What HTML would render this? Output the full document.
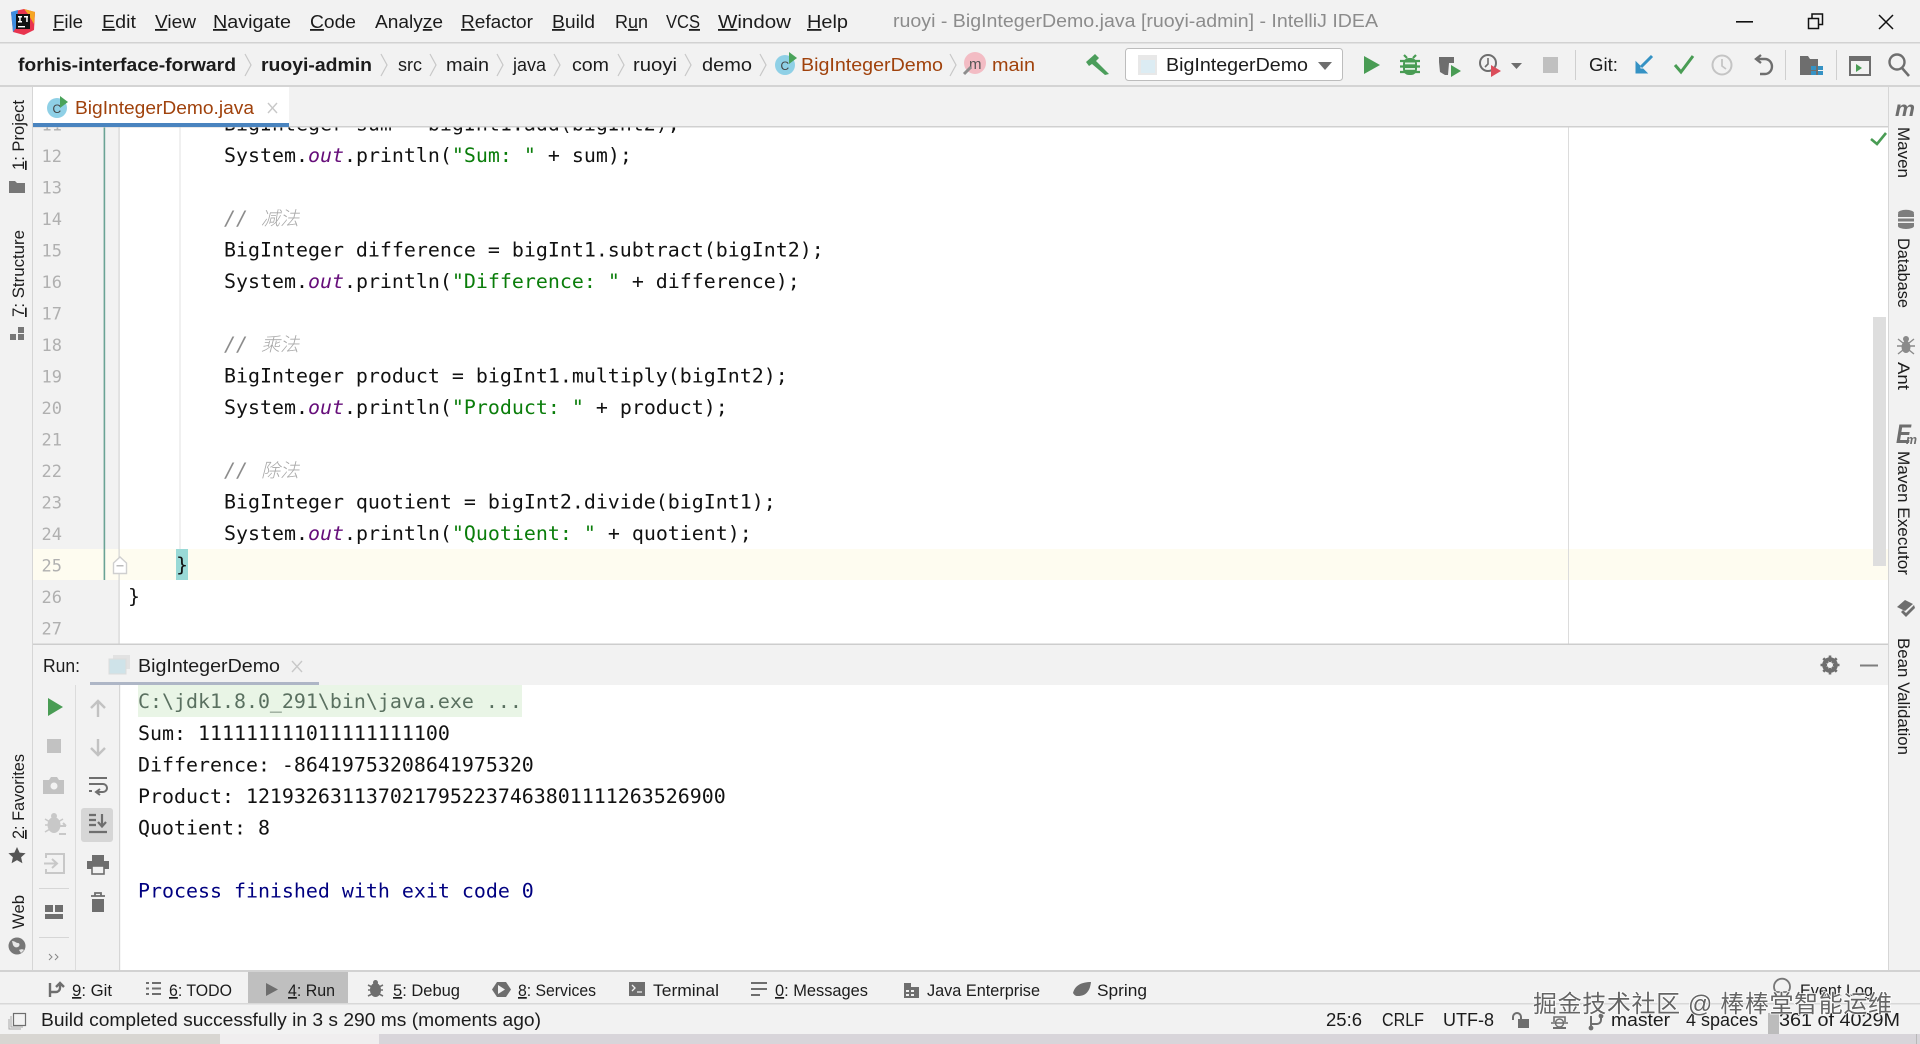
<!DOCTYPE html>
<html lang="en">
<head>
<meta charset="utf-8">
<title>ruoyi - BigIntegerDemo.java [ruoyi-admin] - IntelliJ IDEA</title>
<style>
html,body{margin:0;padding:0;background:#f2f2f2;width:1920px;height:1044px;overflow:hidden}
svg{display:block}
text{font-family:"Liberation Sans",sans-serif;font-size:18px;fill:#1c1c1c;white-space:pre}
.m{font-size:18px}
.c{font-family:"DejaVu Sans Mono","Liberation Mono",monospace;font-size:19.93px;fill:#111}
.n{font-family:"DejaVu Sans Mono","Liberation Mono",monospace;font-size:17px;fill:#b0b0b0}
.o{fill:#660e7a;font-style:italic}
.s{fill:#0a7d0a}
.g{font-family:"DejaVu Sans Mono","Liberation Mono",monospace;font-size:19.93px;fill:#8c8c8c;font-style:italic}
.z{font-family:"Liberation Sans","Noto Sans CJK SC",sans-serif;font-size:19px;fill:#a8a8a8;font-style:italic;font-weight:300}
.br{fill:#a0420c}
.chev{fill:none;stroke:#c8c8c8;stroke-width:1.2}
.wm{font-family:"Liberation Sans","Noto Sans CJK SC",sans-serif;font-size:24px;fill:#5e5e5e;stroke:#fff;stroke-width:1.6px;paint-order:stroke;opacity:.95}
</style>
</head>
<body>
<svg width="1920" height="1044" viewBox="0 0 1920 1044" xmlns="http://www.w3.org/2000/svg">
<defs><clipPath id="ed"><rect x="33" y="127" width="1855" height="517"/></clipPath></defs>
<rect width="1920" height="1044" fill="#f2f2f2"/>

<!-- title bar -->
<rect x="0" y="42" width="1920" height="1.5" fill="#d2d2d2"/>
<g>
  <path d="M11 12 L24 9 L35 12 L34 30 L24 35 L13 32 Z" fill="#e8344e"/>
  <path d="M24 9 L35 12 L34 24 L28 14 Z" fill="#f6a623"/>
  <path d="M11 12 L18 10 L16 28 L13 32 Z" fill="#3d8de0"/>
  <rect x="16" y="14" width="14" height="15" fill="#111"/>
  <rect x="18" y="16" width="4" height="1.5" fill="#fff"/><rect x="19.2" y="16" width="1.5" height="6" fill="#fff"/>
  <rect x="18" y="21" width="4" height="1.5" fill="#fff"/><rect x="24" y="16" width="4" height="1.5" fill="#fff"/><rect x="26.2" y="16" width="1.5" height="6" fill="#fff"/>
  <rect x="18" y="26" width="7" height="1.4" fill="#fff"/>
</g>
<g class="m">
<text x="53" y="28" textLength="30" lengthAdjust="spacingAndGlyphs"><tspan text-decoration="underline">F</tspan>ile</text>
<text x="102" y="28" textLength="34" lengthAdjust="spacingAndGlyphs"><tspan text-decoration="underline">E</tspan>dit</text>
<text x="155" y="28" textLength="41" lengthAdjust="spacingAndGlyphs"><tspan text-decoration="underline">V</tspan>iew</text>
<text x="213" y="28" textLength="78" lengthAdjust="spacingAndGlyphs"><tspan text-decoration="underline">N</tspan>avigate</text>
<text x="310" y="28" textLength="46" lengthAdjust="spacingAndGlyphs"><tspan text-decoration="underline">C</tspan>ode</text>
<text x="375" y="28" textLength="68" lengthAdjust="spacingAndGlyphs">Analy<tspan text-decoration="underline">z</tspan>e</text>
<text x="461" y="28" textLength="72" lengthAdjust="spacingAndGlyphs"><tspan text-decoration="underline">R</tspan>efactor</text>
<text x="552" y="28" textLength="43" lengthAdjust="spacingAndGlyphs"><tspan text-decoration="underline">B</tspan>uild</text>
<text x="615" y="28" textLength="33" lengthAdjust="spacingAndGlyphs">R<tspan text-decoration="underline">u</tspan>n</text>
<text x="666" y="28" textLength="34" lengthAdjust="spacingAndGlyphs">VC<tspan text-decoration="underline">S</tspan></text>
<text x="718" y="28" textLength="73" lengthAdjust="spacingAndGlyphs"><tspan text-decoration="underline">W</tspan>indow</text>
<text x="807" y="28" textLength="41" lengthAdjust="spacingAndGlyphs"><tspan text-decoration="underline">H</tspan>elp</text>
<text x="893" y="27" textLength="485" lengthAdjust="spacingAndGlyphs" style="fill:#8c8c8c">ruoyi - BigIntegerDemo.java [ruoyi-admin] - IntelliJ IDEA</text>
</g>
<rect x="1736" y="21" width="17" height="1.6" fill="#111"/>
<path d="M1808.5 18.5h10v10h-10z M1812 18v-4h10.5v10.5h-4" fill="none" stroke="#111" stroke-width="1.5"/>
<path d="M1879 15l14 14M1893 15l-14 14" stroke="#111" stroke-width="1.5"/>

<!-- breadcrumb / toolbar -->
<rect x="0" y="85" width="1920" height="2" fill="#d4d4d4"/>
<g>
<text x="18" y="71" textLength="218" lengthAdjust="spacingAndGlyphs" font-weight="700">forhis-interface-forward</text>
<text x="261" y="71" textLength="111" lengthAdjust="spacingAndGlyphs" font-weight="700">ruoyi-admin</text>
<text x="398" y="71" textLength="24" lengthAdjust="spacingAndGlyphs">src</text>
<text x="446" y="71" textLength="43" lengthAdjust="spacingAndGlyphs">main</text>
<text x="513" y="71" textLength="33" lengthAdjust="spacingAndGlyphs">java</text>
<text x="572" y="71" textLength="37" lengthAdjust="spacingAndGlyphs">com</text>
<text x="633" y="71" textLength="44" lengthAdjust="spacingAndGlyphs">ruoyi</text>
<text x="702" y="71" textLength="50" lengthAdjust="spacingAndGlyphs">demo</text>
<text x="801" y="71" textLength="142" lengthAdjust="spacingAndGlyphs" class="br">BigIntegerDemo</text>
<text x="992" y="71" textLength="43" lengthAdjust="spacingAndGlyphs" class="br">main</text>
<path class="chev" d="M245 54l6 11-6 11M381 54l6 11-6 11M430 54l6 11-6 11M497 54l6 11-6 11M554 54l6 11-6 11M618 54l6 11-6 11M685 54l6 11-6 11M760 54l6 11-6 11M950 54l6 11-6 11"/>
<circle cx="785" cy="65" r="10" fill="#8fd0e6"/>
<text x="780.5" y="70" style="font-size:12px;fill:#444">C</text>
<path d="M789 52l8 6-8 6z" fill="#4aa35a"/>
<circle cx="975" cy="63" r="11" fill="#f3bcc4"/>
<text x="969" y="69" style="font-size:15px;fill:#555">m</text>
<path d="M964 74l7-7" stroke="#8d8d8d" stroke-width="3"/>
<!-- hammer -->
<path d="M1086 62 L1095 54 L1099 58 L1096 61 L1109 74 L1105 75 L1092 64 L1089 66 Z" fill="#4b9d5b"/>
<!-- run config -->
<rect x="1125.5" y="48.5" width="217" height="32" rx="3" fill="#fff" stroke="#bdbdbd"/>
<rect x="1138" y="55" width="19" height="20" fill="#e8e8e8"/><rect x="1141" y="60" width="14" height="13" fill="#dcecf3"/>
<text x="1166" y="71" textLength="142" lengthAdjust="spacingAndGlyphs">BigIntegerDemo</text>
<path d="M1318 62h14l-7 8z" fill="#6e6e6e"/>
<path d="M1364 56l16 9-16 9z" fill="#499c54"/>
<!-- bug -->
<g fill="#499c54"><rect x="1403" y="58" width="14" height="17" rx="6"/></g>
<path d="M1400 61h5M1420 61h-5M1400 66.5h5M1420 66.5h-5M1400 72h5M1420 72h-5M1404 55l3 3M1416 55l-3 3" stroke="#499c54" stroke-width="2.2"/>
<rect x="1405" y="62.5" width="10" height="1.8" fill="#dff0e2"/><rect x="1405" y="68" width="10" height="1.8" fill="#dff0e2"/>
<!-- coverage -->
<path d="M1439 57h15v6h-5l-1 12h-3l-5-3-1-10z" fill="#6e6e6e"/><path d="M1451 65l10 6-10 6z" fill="#499c54"/>
<!-- profile -->
<circle cx="1488" cy="63" r="8" fill="none" stroke="#6e6e6e" stroke-width="2"/><path d="M1488 58v6l-3 3" stroke="#6e6e6e" stroke-width="1.6" fill="none"/>
<path d="M1491 65l10 6-10 6z" fill="#db4d5a"/>
<path d="M1511 63h11l-5.5 6z" fill="#6e6e6e"/>
<rect x="1543" y="57" width="15" height="16" fill="#c0c0c0"/>
<rect x="1575" y="50" width="1" height="30" fill="#cfcfcf"/>
<text x="1589" y="71" textLength="29" lengthAdjust="spacingAndGlyphs">Git:</text>
<path d="M1652 56 L1641 67" stroke="#3592c4" stroke-width="3"/><path d="M1636 62 V73 H1647 L1643 69 H1640 V66 Z" fill="#3592c4" stroke="#3592c4"/>
<path d="M1675 65 L1681 72 L1693 56" fill="none" stroke="#499c54" stroke-width="3"/>
<circle cx="1722" cy="65" r="9.5" fill="none" stroke="#c4c4c4" stroke-width="2"/><path d="M1722 59v7l4 3" stroke="#c4c4c4" stroke-width="1.7" fill="none"/>
<path d="M1757 59h8a6.5 7 0 0 1 0 15h-5M1761 55l-5 4 5 4" fill="none" stroke="#6e6e6e" stroke-width="2.4"/>
<rect x="1785" y="50" width="1" height="30" fill="#cfcfcf"/>
<path d="M1800 56h8l2 3h8v16h-18z" fill="#6e6e6e"/>
<g fill="#3592c4"><rect x="1811" y="66" width="5" height="4"/><rect x="1818" y="66" width="5" height="4"/><rect x="1811" y="71" width="5" height="4"/><rect x="1818" y="71" width="5" height="4"/></g>
<rect x="1836" y="50" width="1" height="30" fill="#cfcfcf"/>
<rect x="1850" y="57" width="20" height="18" fill="none" stroke="#6e6e6e" stroke-width="2"/><rect x="1850" y="57" width="20" height="4" fill="#6e6e6e"/>
<path d="M1856 64l6 4-6 4z" fill="#499c54"/>
<circle cx="1897" cy="62" r="7.5" fill="none" stroke="#6e6e6e" stroke-width="2.4"/><path d="M1902 68l7 8" stroke="#6e6e6e" stroke-width="2.6"/>

<!-- editor -->
<rect x="33" y="127" width="1855" height="517" fill="#fff"/>
<rect x="33" y="127" width="86" height="517" fill="#f2f2f2"/>
<g clip-path="url(#ed)">
<rect x="33" y="549" width="1855" height="31" fill="#fefcf0"/>
<rect x="176" y="549" width="12" height="31" fill="#99d9d6"/>
<rect x="118.5" y="127" width="1.2" height="517" fill="#d4d4d4"/>
<rect x="179.5" y="127" width="1" height="422" fill="#e0e0e0"/>
<rect x="1568" y="127" width="1" height="517" fill="#dcdcdc"/>
<rect x="103.6" y="127" width="1.6" height="453" fill="#6aa395"/>
<path d="M113.5 563l6.5-6 6.5 6v10.5h-13z" fill="#fff" stroke="#cfcfcf" stroke-width="1.4"/><rect x="116.5" y="565" width="7" height="1.5" fill="#bcbcbc"/>
<g text-anchor="end">
<text class="n" x="62" y="130.6">11</text><text class="n" x="62" y="162.1">12</text><text class="n" x="62" y="193.6">13</text><text class="n" x="62" y="225.1">14</text><text class="n" x="62" y="256.6">15</text><text class="n" x="62" y="288.1">16</text><text class="n" x="62" y="319.6">17</text><text class="n" x="62" y="351.1">18</text><text class="n" x="62" y="382.6">19</text><text class="n" x="62" y="414.1">20</text><text class="n" x="62" y="445.6">21</text><text class="n" x="62" y="477.1">22</text><text class="n" x="62" y="508.6">23</text><text class="n" x="62" y="540.1">24</text><text class="n" x="62" y="571.6">25</text><text class="n" x="62" y="603.1">26</text><text class="n" x="62" y="634.6">27</text>
</g>
<text class="c" x="224" y="130.6">BigInteger sum = bigInt1.add(bigInt2);</text>
<text class="c" x="224" y="162.1">System.<tspan class="o">out</tspan>.println(<tspan class="s">"Sum: "</tspan> + sum);</text>
<text class="g" x="224" y="225.1">//</text><text class="z" x="261" y="225.1">减法</text>
<text class="c" x="224" y="256.6">BigInteger difference = bigInt1.subtract(bigInt2);</text>
<text class="c" x="224" y="288.1">System.<tspan class="o">out</tspan>.println(<tspan class="s">"Difference: "</tspan> + difference);</text>
<text class="g" x="224" y="351.1">//</text><text class="z" x="261" y="351.1">乘法</text>
<text class="c" x="224" y="382.6">BigInteger product = bigInt1.multiply(bigInt2);</text>
<text class="c" x="224" y="414.1">System.<tspan class="o">out</tspan>.println(<tspan class="s">"Product: "</tspan> + product);</text>
<text class="g" x="224" y="477.1">//</text><text class="z" x="261" y="477.1">除法</text>
<text class="c" x="224" y="508.6">BigInteger quotient = bigInt2.divide(bigInt1);</text>
<text class="c" x="224" y="540.1">System.<tspan class="o">out</tspan>.println(<tspan class="s">"Quotient: "</tspan> + quotient);</text>
<text class="c" x="176" y="571.6">}</text>
<text class="c" x="128" y="603.1">}</text>
<rect x="1873" y="317" width="13" height="249" fill="#dedede"/>
<path d="M1871 139l6 5 9-11" fill="none" stroke="#499c54" stroke-width="2.6"/>
</g>

<!-- tab bar -->
<rect x="33" y="126" width="1855" height="1.5" fill="#d0d0d0"/>
<rect x="33" y="87" width="256" height="36" fill="#fff"/>
<rect x="33" y="123" width="256" height="4" fill="#4a84bf"/>
<circle cx="57" cy="108" r="10" fill="#8fd0e6"/>
<text x="52.5" y="113" style="font-size:12px;fill:#444">C</text>
<path d="M60 96l8 6-8 6z" fill="#4aa35a"/>
<text x="75" y="114" textLength="179" lengthAdjust="spacingAndGlyphs" class="br">BigIntegerDemo.java</text>
<path d="M268 103l9 10M277 103l-9 10" stroke="#c8c8c8" stroke-width="1.4"/>

<!-- left strip -->
<rect x="32" y="87" width="1" height="883" fill="#d6d6d6"/>
<text transform="translate(24 170) rotate(-90)" textLength="70" lengthAdjust="spacingAndGlyphs" style="font-size:17px"><tspan text-decoration="underline">1</tspan>: Project</text>
<path d="M9 181h6l2 2h8v10h-16z" fill="#777"/>
<text transform="translate(24 317) rotate(-90)" textLength="87" lengthAdjust="spacingAndGlyphs" style="font-size:17px"><tspan text-decoration="underline">7</tspan>: Structure</text>
<g fill="#777"><rect x="10" y="334" width="6" height="6"/><rect x="18" y="327" width="6" height="6"/><rect x="18" y="334" width="6" height="6"/></g>
<text transform="translate(24 839) rotate(-90)" textLength="85" lengthAdjust="spacingAndGlyphs" style="font-size:17px"><tspan text-decoration="underline">2</tspan>: Favorites</text>
<path d="M17 847l2.6 5.6 6 .6-4.5 4 1.3 6-5.4-3.1-5.4 3.1 1.3-6-4.5-4 6-.6z" fill="#555"/>
<text transform="translate(24 929) rotate(-90)" textLength="34" lengthAdjust="spacingAndGlyphs" style="font-size:17px">Web</text>
<circle cx="17" cy="946" r="8.5" fill="#777"/><path d="M12 941c3 0 4 2 6 2s2 3 0 4-4 0-5-2zM19 950c2-1 4-1 5 0l-3 3z" fill="#e6e6e6"/>

<!-- right strip -->
<rect x="1888" y="87" width="1" height="917" fill="#d6d6d6"/>
<text x="1895" y="116" style="font-size:21px;font-weight:700;font-style:italic;fill:#6e6e6e" textLength="20" lengthAdjust="spacingAndGlyphs">m</text>
<text transform="translate(1898 127) rotate(90)" textLength="51" lengthAdjust="spacingAndGlyphs" style="font-size:17px">Maven</text>
<g fill="#7e7e7e"><ellipse cx="1906" cy="213" rx="8" ry="3.2"/><rect x="1898" y="214" width="16" height="3"/><rect x="1898" y="218.5" width="16" height="3"/><rect x="1898" y="223" width="16" height="3"/><ellipse cx="1906" cy="226" rx="8" ry="3"/></g>
<text transform="translate(1898 238) rotate(90)" textLength="70" lengthAdjust="spacingAndGlyphs" style="font-size:17px">Database</text>
<g fill="#8a8a8a"><ellipse cx="1906" cy="347" rx="4.5" ry="6"/><circle cx="1906" cy="339" r="3"/></g>
<path d="M1898 339l5 4M1914 339l-5 4M1897 346h6M1915 346h-6M1898 354l5-4M1914 354l-5-4" stroke="#8a8a8a" stroke-width="1.4"/>
<text transform="translate(1898 362) rotate(90)" textLength="28" lengthAdjust="spacingAndGlyphs" style="font-size:17px">Ant</text>
<text x="1896" y="443" style="font-size:27px;font-weight:700;font-style:italic;fill:#6e6e6e" textLength="15" lengthAdjust="spacingAndGlyphs">E</text>
<text x="1906" y="444" style="font-size:13px;font-weight:700;font-style:italic;fill:#6e6e6e" textLength="11" lengthAdjust="spacingAndGlyphs">m</text>
<text transform="translate(1898 451) rotate(90)" textLength="124" lengthAdjust="spacingAndGlyphs" style="font-size:17px">Maven Executor</text>
<path d="M1897 607l8-7 8 4-8 7zM1901 612l2-2 3 3 8-8 1 3-9 9z" fill="#6e6e6e"/>
<text transform="translate(1898 638) rotate(90)" textLength="117" lengthAdjust="spacingAndGlyphs" style="font-size:17px">Bean Validation</text>

<!-- run panel -->
<rect x="33" y="643.5" width="1855" height="1.6" fill="#cdcdcd"/>
<rect x="33" y="645" width="1855" height="40" fill="#f2f2f2"/>
<text x="43" y="672" textLength="37" lengthAdjust="spacingAndGlyphs">Run:</text>
<rect x="113" y="655" width="17" height="14" fill="#e2e2e2"/><rect x="109" y="659" width="17" height="15" fill="#cfe3e9" stroke="#dcdcdc"/>
<text x="138" y="672" textLength="142" lengthAdjust="spacingAndGlyphs">BigIntegerDemo</text>
<path d="M292 661l10 11M302 661l-10 11" stroke="#c8c8c8" stroke-width="1.4"/>
<rect x="90" y="682" width="229" height="3.5" fill="#aeb6c6"/>
<!-- gear, minimize -->
<g transform="translate(1830 665)"><circle r="6" fill="none" stroke="#6e6e6e" stroke-width="3.6"/><path d="M0-9.5V9.5M-9.5 0H9.5M-6.7-6.7L6.7 6.7M6.7-6.7L-6.7 6.7" stroke="#6e6e6e" stroke-width="2.6"/><circle r="3" fill="#f2f2f2"/></g>
<rect x="1860" y="664.5" width="18" height="2" fill="#7e7e7e"/>
<!-- console -->
<rect x="120" y="685" width="1768" height="285" fill="#fff"/>
<rect x="33" y="685" width="86" height="285" fill="#f2f2f2"/>
<rect x="75" y="685" width="1" height="285" fill="#dcdcdc"/>
<rect x="119" y="685" width="1.2" height="285" fill="#d6d6d6"/>
<rect x="138" y="685" width="384" height="32" fill="#e9f5e6"/>
<text class="c" x="138" y="708" style="fill:#5a7060">C:\jdk1.8.0_291\bin\java.exe ...</text>
<text class="c" x="138" y="739.8">Sum: 111111111011111111100</text>
<text class="c" x="138" y="771.3">Difference: -86419753208641975320</text>
<text class="c" x="138" y="802.8">Product: 1219326311370217952237463801111263526900</text>
<text class="c" x="138" y="834.3">Quotient: 8</text>
<text class="c" x="138" y="897.3" style="fill:#000080">Process finished with exit code 0</text>
<!-- run left column icons -->
<path d="M48 698l15 9-15 9z" fill="#499c54"/>
<rect x="47" y="739" width="14" height="14" fill="#c2c2c2"/>
<path d="M43 780h6l2-3h6l2 3h5v14h-21z" fill="#c2c2c2"/><circle cx="54" cy="786" r="3.5" fill="#f2f2f2"/>
<g fill="#c8c8c8"><ellipse cx="54" cy="825" rx="6.5" ry="8"/><circle cx="54" cy="816" r="3"/></g><path d="M45 819l5 3M63 819l-5 3M45 825h5M45 832l5-3" stroke="#c8c8c8" stroke-width="1.6"/><path d="M59 826h7M66 826l-3-3M66 834h-7" stroke="#c8c8c8" stroke-width="2" fill="none"/>
<path d="M46 858v-4h18v19h-18v-4M44 863.5h12M52 859l5 4.5-5 4.5" fill="none" stroke="#c8c8c8" stroke-width="2"/>
<rect x="39" y="888" width="30" height="1" fill="#d6d6d6"/>
<g fill="#6e6e6e"><rect x="45" y="905" width="8" height="7"/><rect x="55" y="905" width="8" height="7"/><rect x="45" y="914" width="18" height="5"/></g>
<rect x="39" y="937" width="30" height="1" fill="#d6d6d6"/>
<path d="M49 954l3 3-3 3M55 954l3 3-3 3" fill="none" stroke="#888" stroke-width="1"/>
<!-- run right column icons -->
<path d="M98 717v-15M91 708l7-7 7 7" fill="none" stroke="#c2c2c2" stroke-width="2.4"/>
<path d="M98 739v15M91 748l7 7 7-7" fill="none" stroke="#c2c2c2" stroke-width="2.4"/>
<path d="M89 778h18M89 784h14a4 4 0 0 1 0 8h-6M100 789l-4 3 4 3M89 791h3" fill="none" stroke="#6e6e6e" stroke-width="2"/>
<rect x="81" y="808" width="32" height="34" rx="3" fill="#d6d6d6"/>
<path d="M89 815h7M89 820h7M89 825h7M89 832h18M102 814v12M98 822l4 4.5 4-4.5" fill="none" stroke="#6e6e6e" stroke-width="2.2"/>
<path d="M92 855h12v6h-12z" fill="#6e6e6e"/><rect x="87" y="861" width="22" height="8" fill="#6e6e6e"/><rect x="92" y="866" width="12" height="8" fill="#f2f2f2" stroke="#6e6e6e" stroke-width="1.6"/>
<path d="M91 896h14M95 896v-3h6v3" fill="none" stroke="#6e6e6e" stroke-width="1.8"/><path d="M92 899h12v13h-12z" fill="#6e6e6e"/>

<!-- bottom tool bar -->
<rect x="0" y="970" width="1920" height="2" fill="#d2d2d2"/>
<rect x="0" y="972" width="1920" height="31" fill="#f2f2f2"/>
<rect x="248" y="972" width="100" height="31" fill="#bfbfbf"/>
<rect x="0" y="1003" width="1920" height="1.5" fill="#d8d8d8"/>
<g>
<path d="M50 983v14M50 992h6a4 4 0 0 0 4-4v-4M56 987l4-4 4 4" fill="none" stroke="#6e6e6e" stroke-width="2.4"/>
<text x="72" y="996" textLength="40" lengthAdjust="spacingAndGlyphs" style="font-size:17px"><tspan text-decoration="underline">9</tspan>: Git</text>
<path d="M146 983h3M152 983h9M146 988.5h3M152 988.5h9M146 994h3M152 994h9" stroke="#6e6e6e" stroke-width="2"/>
<text x="169" y="996" textLength="63" lengthAdjust="spacingAndGlyphs" style="font-size:17px"><tspan text-decoration="underline">6</tspan>: TODO</text>
<path d="M266 983l12 6.5-12 6.5z" fill="#6e6e6e"/>
<text x="288" y="996" textLength="47" lengthAdjust="spacingAndGlyphs" style="font-size:17px"><tspan text-decoration="underline">4</tspan>: Run</text>
<g fill="#6e6e6e"><ellipse cx="375.5" cy="990" rx="5.5" ry="7"/><circle cx="375.5" cy="982.5" r="2.5"/></g><path d="M368 985l4 2M383 985l-4 2M368 990h4M383 990h-4M368 996l4-2M383 996l-4-2" stroke="#6e6e6e" stroke-width="1.6"/>
<text x="393" y="996" textLength="67" lengthAdjust="spacingAndGlyphs" style="font-size:17px"><tspan text-decoration="underline">5</tspan>: Debug</text>
<path d="M497 982h9l5 7.5-5 7.5h-9l-5-7.5z" fill="#6e6e6e"/><path d="M498 985l7 4.5-7 4.5z" fill="#f2f2f2"/>
<text x="518" y="996" textLength="78" lengthAdjust="spacingAndGlyphs" style="font-size:17px"><tspan text-decoration="underline">8</tspan>: Services</text>
<rect x="629" y="982" width="16" height="14" fill="#6e6e6e"/><path d="M632 985l3 3-3 3M637 992h5" fill="none" stroke="#f2f2f2" stroke-width="1.3"/>
<text x="653" y="996" textLength="66" lengthAdjust="spacingAndGlyphs" style="font-size:17px">Terminal</text>
<path d="M751 983h16M751 989h16M751 995h9" stroke="#6e6e6e" stroke-width="2"/>
<text x="775" y="996" textLength="93" lengthAdjust="spacingAndGlyphs" style="font-size:17px"><tspan text-decoration="underline">0</tspan>: Messages</text>
<path d="M904 983h7v4h8v11h-15z" fill="#6e6e6e"/><g fill="#f2f2f2"><rect x="906" y="990" width="3" height="2"/><rect x="911" y="990" width="3" height="2"/><rect x="906" y="994" width="3" height="2"/><rect x="911" y="994" width="3" height="2"/></g>
<text x="927" y="996" textLength="113" lengthAdjust="spacingAndGlyphs" style="font-size:17px">Java Enterprise</text>
<path d="M1073 993c2-8 9-11 18-11-1 9-5 14-13 14-2 0-3 0-5-3z" fill="#6e6e6e"/>
<text x="1097" y="996" textLength="50" lengthAdjust="spacingAndGlyphs" style="font-size:17px">Spring</text>
<path d="M1776 992a8 8 0 1 1 12 0M1776 992h12" fill="none" stroke="#777" stroke-width="1.8"/>
<text x="1800" y="996" textLength="73" lengthAdjust="spacingAndGlyphs" style="font-size:17px">Event Log</text>
</g>

<!-- status bar -->
<rect x="0" y="1005" width="1920" height="29" fill="#f2f2f2"/>
<rect x="13.5" y="1013.5" width="12" height="12" fill="none" stroke="#6e6e6e" stroke-width="1.2"/>
<path d="M11 1016v11h12M9 1019v10h12" fill="none" stroke="#a8a8a8" stroke-width="1"/>
<text x="41" y="1026" textLength="500" lengthAdjust="spacingAndGlyphs">Build completed successfully in 3 s 290 ms (moments ago)</text>
<text x="1326" y="1026" textLength="36" lengthAdjust="spacingAndGlyphs">25:6</text>
<text x="1382" y="1026" textLength="42" lengthAdjust="spacingAndGlyphs">CRLF</text>
<text x="1443" y="1026" textLength="51" lengthAdjust="spacingAndGlyphs">UTF-8</text>
<rect x="1518" y="1019" width="11" height="9" fill="#6e6e6e"/><path d="M1513 1020v-3a4 4 0 0 1 8 0v2" fill="none" stroke="#6e6e6e" stroke-width="2"/>
<path d="M1551 1023h17M1554 1022v-5h11v5" fill="none" stroke="#6e6e6e" stroke-width="1.6"/><circle cx="1559.5" cy="1023" r="4" fill="none" stroke="#6e6e6e" stroke-width="1.4"/><path d="M1553 1028h13" stroke="#6e6e6e" stroke-width="2"/>
<path d="M1591 1016v12M1591 1024h6a4 4 0 0 0 4-4v-3" fill="none" stroke="#6e6e6e" stroke-width="2"/><circle cx="1591" cy="1028" r="2.4" fill="#6e6e6e"/><circle cx="1601" cy="1016" r="2.4" fill="#6e6e6e"/>
<text x="1611" y="1026" textLength="59" lengthAdjust="spacingAndGlyphs">master</text>
<text x="1686" y="1026" textLength="72" lengthAdjust="spacingAndGlyphs">4 spaces</text>
<rect x="1768" y="1013" width="11" height="21" fill="#bcbcbc"/>
<text x="1779" y="1026" textLength="121" lengthAdjust="spacingAndGlyphs">361 of 4029M</text>

<!-- desktop strip -->
<rect x="0" y="1034" width="220" height="10" fill="#d8d6d2"/>
<rect x="220" y="1034" width="159" height="10" fill="#f0eeef"/>
<rect x="379" y="1034" width="1541" height="10" fill="#d8d5da"/>
<rect x="1916" y="1034" width="1" height="10" fill="#b8b8b8"/>

<!-- watermark -->
<text class="wm" x="1533" y="1012" textLength="359" lengthAdjust="spacing">掘金技术社区 @ 棒棒堂智能运维</text>
</svg>
</body>
</html>
